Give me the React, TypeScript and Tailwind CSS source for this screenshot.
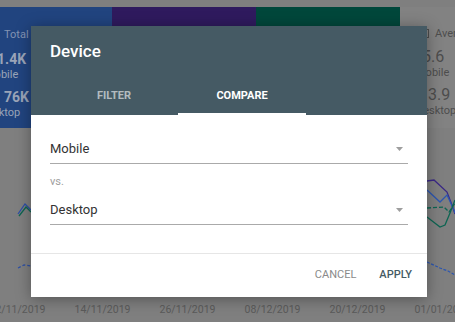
import React from 'react';

const dates = ['12/11/2019', '14/11/2019', '26/11/2019', '08/12/2019', '20/12/2019', '01/01/2020'];

const Caret = () => (
    <svg width="7" height="4" viewBox="0 0 7 4" className="mr-[5px]">
        <path d="M0 0 L7 0 L3.5 4 Z" fill="#9e9e9e" />
    </svg>
);

const SelectField = ({ value }: { value: string }) => (
    <div className="flex items-center justify-between border-b border-[#aaaaaa] pb-[6px]">
        <span className="text-[13px] leading-[16px] text-[#333333]">{value}</span>
        <Caret />
    </div>
);

const App = () => {
    return (
        <div className="relative w-[455px] h-[322px] overflow-hidden bg-[#7f7f7f] font-['Roboto',sans-serif]">
            {/* scorecards behind the dialog */}
            <div className="flex pt-[7px] h-[128px]">
                <div className="w-[112px] shrink-0 bg-[#21447f] text-[#9aa4b8] overflow-hidden">
                    <div className="mt-[21px] ml-[4px] text-[11px] leading-[13px] text-[#8393b3] whitespace-nowrap">Total clicks</div>
                    <div className="mt-[9px] ml-[-11px] text-[14px] leading-[18px] font-bold">11.4K</div>
                    <div className="ml-[-15px] text-[11px] leading-[14px]">Mobile</div>
                    <div className="mt-[6px] ml-[4px] text-[14px] leading-[18px] font-bold">76K</div>
                    <div className="ml-[-20px] text-[11px] leading-[14px]">Desktop</div>
                </div>
                <div className="w-[144px] shrink-0 bg-[#2f1a5e]" />
                <div className="w-[144px] shrink-0 bg-[#00473b]" />
                <div className="flex-1 min-w-0 overflow-hidden bg-[#828282] text-[#4d4d4d]">
                    <div className="mt-[20px] ml-[19px] flex items-center gap-[6px] text-[11px] leading-[13px]">
                        <span className="w-[10px] h-[9px] border border-[#4d4d4d] shrink-0" />
                        <span className="whitespace-nowrap">Average position</span>
                    </div>
                    <div className="mt-[7px] ml-[22px] text-[16px] leading-[19px]">5.6</div>
                    <div className="ml-[16px] text-[11px] leading-[14px]">Mobile</div>
                    <div className="mt-[5px] ml-[19px] text-[16px] leading-[19px]">13.9</div>
                    <div className="ml-[16px] text-[11px] leading-[14px]">Desktop</div>
                </div>
            </div>

            {/* chart behind the dialog */}
            <svg width="455" height="170" viewBox="0 128 455 170" className="block">
                <g fill="none" strokeWidth="1.3">
                    <path d="M18 214 L25 204 L31 210" stroke="#2c4fa6" />
                    <path d="M19 216 L26 207 L31 212" stroke="#0d6552" />
                    <path d="M18 268 L24 265 L31 266" stroke="#2c4fa6" strokeDasharray="3 2" />
                    <path d="M427 181 L434 180 L447 192 L452 205 L455 214" stroke="#3a2886" />
                    <path d="M427 190 L440 202 L447 195 L454 210 L455 213" stroke="#2c56b0" />
                    <path d="M427 208 L444 207 L449 212 L455 203" stroke="#0d6552" strokeDasharray="4 2" />
                    <path d="M427 217 L440 227 L445 225 L450 213 L455 200" stroke="#0d6552" />
                    <path d="M427 262 L440 268 L448 271 L455 275" stroke="#2c56b0" strokeDasharray="3 1.5" />
                </g>
            </svg>
            <div className="flex ml-[-25px] mt-[5px]">
                {dates.map((d) => (
                    <div key={d} className="w-[85px] shrink-0 text-center text-[10.5px] leading-[13px] text-[#5a5a5a]">
                        {d}
                    </div>
                ))}
            </div>

            {/* dialog */}
            <div className="absolute left-[31px] top-[26px] w-[396px] h-[271px] bg-white flex flex-col shadow-[0_2px_14px_rgba(0,0,0,0.35)]">
                <div className="bg-[#455a64] h-[89px] px-[19px] flex flex-col">
                    <div className="pt-[15px] text-[17px] leading-[20px] font-medium text-white">Device</div>
                    <div className="mt-auto flex">
                        <div className="w-[128px] flex flex-col">
                            <div className="h-[34px] flex items-center justify-center text-[11px] font-bold text-white/60">FILTER</div>
                            <div className="h-[2px]" />
                        </div>
                        <div className="w-[128px] flex flex-col">
                            <div className="h-[34px] flex items-center justify-center text-[11px] font-bold text-white">COMPARE</div>
                            <div className="h-[2px] bg-white" />
                        </div>
                    </div>
                </div>
                <div className="px-[19px] pt-[26px] h-[139px] border-b border-[#e6e6e6]">
                    <SelectField value="Mobile" />
                    <div className="mt-[11px] text-[11px] leading-[13px] text-[#9e9e9e]">vs.</div>
                    <div className="mt-[14px]">
                        <SelectField value="Desktop" />
                    </div>
                </div>
                <div className="flex-1 flex items-center justify-end gap-[23px] pr-[15px]">
                    <button className="text-[11px] text-[#8a8a8a]">CANCEL</button>
                    <button className="text-[11px] font-medium text-[#455a64]">APPLY</button>
                </div>
            </div>
        </div>
    );
};

export default App;
